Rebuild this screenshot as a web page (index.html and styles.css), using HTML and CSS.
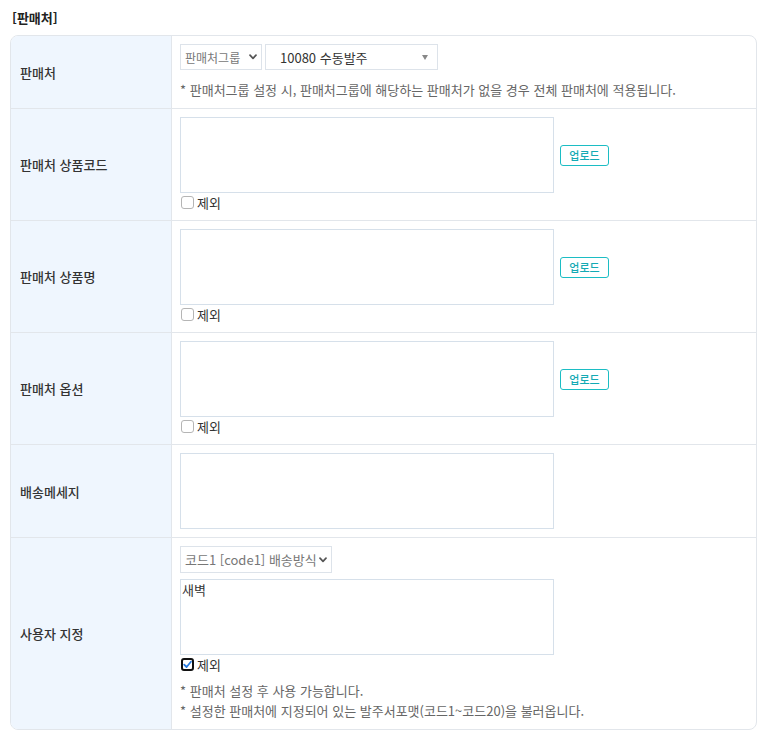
FILE: index.html
```html
<!DOCTYPE html>
<html lang="ko">
<head>
<meta charset="utf-8">
<link rel="stylesheet" href="styles.css">
</head>
<body>
<div class="page">
  <h2 class="title">[판매처]</h2>
  <div class="table">
    <div class="row">
      <div class="label">판매처</div>
      <div class="cell">
        <div class="sel-line">
          <div class="fsel group-sel"><span class="fsel-text">판매처그룹</span><svg class="chev" width="8" height="6" viewBox="0 0 8 6"><path d="M1 1.2 L4 4.4 L7 1.2" fill="none" stroke="#555" stroke-width="1.7" stroke-linecap="round" stroke-linejoin="round"/></svg></div>
          <div class="combo"><span class="combo-text">10080 수동발주</span><span class="combo-arrow"></span></div>
        </div>
        <p class="note first-note">* 판매처그룹 설정 시, 판매처그룹에 해당하는 판매처가 없을 경우 전체 판매처에 적용됩니다.</p>
      </div>
    </div>
    <div class="row">
      <div class="label">판매처 상품코드</div>
      <div class="cell">
        <div class="ta-line"><textarea class="ta"></textarea><button class="upload">업로드</button></div>
        <label class="chk"><span class="box"></span>제외</label>
      </div>
    </div>
    <div class="row">
      <div class="label">판매처 상품명</div>
      <div class="cell">
        <div class="ta-line"><textarea class="ta"></textarea><button class="upload">업로드</button></div>
        <label class="chk"><span class="box"></span>제외</label>
      </div>
    </div>
    <div class="row">
      <div class="label">판매처 옵션</div>
      <div class="cell">
        <div class="ta-line"><textarea class="ta"></textarea><button class="upload">업로드</button></div>
        <label class="chk"><span class="box"></span>제외</label>
      </div>
    </div>
    <div class="row">
      <div class="label">배송메세지</div>
      <div class="cell">
        <div class="ta-line"><textarea class="ta"></textarea></div>
      </div>
    </div>
    <div class="row last">
      <div class="label">사용자 지정</div>
      <div class="cell">
        <div class="fsel code-sel"><span class="fsel-text">코드1 [code1] 배송방식</span><svg class="chev" width="8" height="6" viewBox="0 0 8 6"><path d="M1 1.2 L4 4.4 L7 1.2" fill="none" stroke="#555" stroke-width="1.7" stroke-linecap="round" stroke-linejoin="round"/></svg></div>
        <div class="ta-line gap-top"><textarea class="ta">새벽</textarea></div>
        <label class="chk"><span class="box checked"><svg width="9" height="9" viewBox="0 0 9 9"><path d="M1.2 4.6 L3.6 7 L7.9 1.8" fill="none" stroke="#2a7de1" stroke-width="1.8" stroke-linecap="round" stroke-linejoin="round"/></svg></span>제외</label>
        <p class="note notes-top">* 판매처 설정 후 사용 가능합니다.</p>
        <p class="note">* 설정한 판매처에 지정되어 있는 발주서포맷(코드1~코드20)을 불러옵니다.</p>
      </div>
    </div>
  </div>
</div>
</body>
</html>
```
FILE: styles.css
```css
* { box-sizing: border-box; }
body {
  margin: 0;
  background: #fff;
  font-family: "Noto Sans CJK KR", "Noto Sans", sans-serif;
  color: #333;
  font-size: 13px;
}
.page { padding: 8px 13px 0 10px; }
.title {
  margin: 0 0 8px 2px;
  font-size: 13px;
  font-weight: bold;
  line-height: 19px;
  color: #222;
}
.table {
  border: 1px solid #e2e6eb;
  border-radius: 8px;
  overflow: hidden;
  width: 747px;
}
.row {
  display: flex;
  border-bottom: 1px solid #e2e6eb;
}
.row.last { border-bottom: none; }
.label {
  width: 161px;
  flex: none;
  background: #eff6fe;
  border-right: 1px solid #e2e6eb;
  display: flex;
  align-items: center;
  padding: 0 9px;
  font-weight: 500;
  color: #333;
  font-size: 13px;
}
.cell {
  flex: 1;
  padding: 8px 8px 8px 8px;
}
.sel-line { display: flex; gap: 3px; }
.fsel {
  height: 26px;
  border: 1px solid #dde3ea;
  background: #fff;
  color: #777;
  display: flex;
  align-items: center;
  justify-content: space-between;
  padding: 0 4px 0 4px;
  white-space: nowrap;
}
.group-sel { width: 82px; font-size: 12px; }
.code-sel { width: 152px; height: 27px; font-size: 13px; }
.chev { flex: none; }
.combo {
  width: 173px;
  height: 26px;
  border: 1px solid #dde3ea;
  display: flex;
  align-items: center;
  justify-content: space-between;
  padding: 0 9px 0 14px;
  color: #333;
  font-size: 13px;
}
.combo-arrow {
  width: 0; height: 0;
  border-left: 3px solid transparent;
  border-right: 3px solid transparent;
  border-top: 5px solid #888;
}
.note {
  margin: 0;
  line-height: 20px;
  color: #666;
  font-size: 13px;
}
.first-note { margin-top: 10px; }
.notes-top { margin-top: 7px; }
.ta-line { display: flex; align-items: center; }
.gap-top { margin-top: 6px; }
.ta {
  width: 374px;
  height: 76px;
  border: 1px solid #d6e0ea;
  resize: none;
  display: block;
  padding: 1px 1px;
  font-family: "Noto Sans CJK KR", sans-serif;
  font-size: 13px;
  color: #333;
  line-height: 18px;
  outline: none;
}
.upload {
  margin-left: 6px;
  width: 49px;
  height: 21px;
  padding: 0;
  border: 1px solid #1cbdc4;
  border-radius: 3px;
  background: #fff;
  color: #14aab4;
  font-family: "Noto Sans CJK KR", sans-serif;
  font-size: 11px;
  font-weight: 500;
  line-height: 19px;
}
.chk {
  display: flex;
  align-items: center;
  height: 19px;
  gap: 3px;
  color: #333;
  font-size: 13px;
}
.box {
  width: 13px;
  height: 13px;
  border: 1px solid #b5b5b5;
  border-radius: 3px;
  background: #fff;
  margin-left: 1px;
  display: flex;
  align-items: center;
  justify-content: center;
}
.box.checked { border: 2px solid #111; }
```
